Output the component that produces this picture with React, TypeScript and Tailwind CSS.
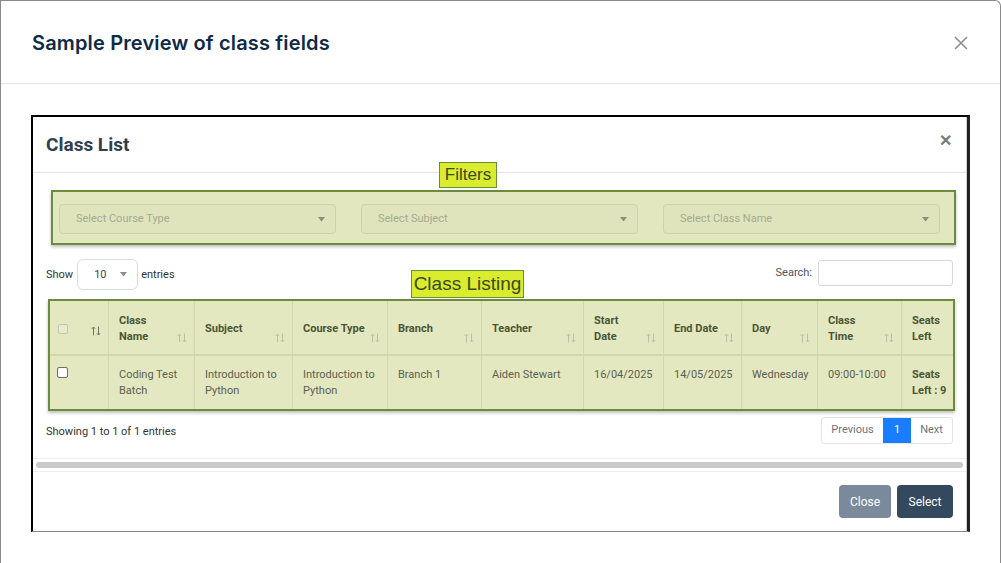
import React from "react";

const Caret = () => (
  <svg width="7" height="5" viewBox="0 0 7 5" className="shrink-0">
    <path d="M0 0 L7 0 L3.5 4.5 Z" fill="#8a8f80" />
  </svg>
);

const Sort = ({ dark = false }: { dark?: boolean }) => {
  const c = dark ? "#6f7562" : "#bcc1a4";
  return (
    <svg width="10" height="10" viewBox="0 0 10 10" className="shrink-0">
      <path d="M2.5 9.5 V1 M0.8 2.8 L2.5 1 L4.2 2.8" stroke={c} strokeWidth="1" fill="none" />
      <path d="M7.5 0.5 V9 M5.8 7.2 L7.5 9 L9.2 7.2" stroke={c} strokeWidth="1" fill="none" />
    </svg>
  );
};

const cols = [
  { w: 59, h: "", body: "" },
  { w: 86, h: "Class\nName", body: "Coding Test\nBatch" },
  { w: 98, h: "Subject", body: "Introduction to\nPython" },
  { w: 95, h: "Course Type", body: "Introduction to\nPython" },
  { w: 94, h: "Branch", body: "Branch 1" },
  { w: 102, h: "Teacher", body: "Aiden Stewart" },
  { w: 80, h: "Start\nDate", body: "16/04/2025" },
  { w: 78, h: "End Date", body: "14/05/2025" },
  { w: 76, h: "Day", body: "Wednesday" },
  { w: 84, h: "Class\nTime", body: "09:00-10:00" },
  { w: 60, h: "Seats\nLeft", body: "Seats\nLeft : 9" },
];

export default function App() {
  return (
    <div className="w-[1001px] h-[563px] overflow-hidden bg-white" style={{ fontFamily: "Roboto, sans-serif" }}>
      <div className="w-[1001px] h-[570px] border-t border-l border-r border-[#8a8a8a] rounded-tr-[6px] bg-white flex flex-col">
        {/* Header */}
        <div className="h-[83px] border-b border-[#e6e6e6] flex items-center justify-between pl-[31px] pr-[32px] shrink-0">
          <div className="text-[20px] font-semibold text-[#0e2a47] tracking-[0.15px] mt-[2px]" style={{ fontFamily: "Inter, 'Open Sans', sans-serif" }}>
            Sample Preview of class fields
          </div>
          <svg width="14" height="14" viewBox="0 0 14 14" className="mt-[1px]">
            <path d="M1 1 L13 13 M13 1 L1 13" stroke="#8e8e8e" strokeWidth="1.6" />
          </svg>
        </div>
        {/* Body */}
        <div className="pl-[30px] pt-[31px]">
          <div className="w-[939px] h-[417px] border-t-2 border-l-2 border-r-[3px] border-t-black border-l-black border-r-[#222] border-b border-b-[#8a8a8a] bg-white relative">
            <div className="h-full w-[934px] border-r border-[#cfcfcf] flex flex-col">
              {/* Class List header */}
              <div className="h-[56px] border-b border-[#e3e3e3] flex items-center justify-between pl-[13px] pr-[14px] shrink-0">
                <div className="text-[19px] font-bold text-[#2f3f50] mt-[2px]">Class List</div>
                <div className="text-[16px] font-bold text-[#7a7a7a] leading-none mt-[-8px]">✕</div>
              </div>
              {/* Filters */}
              <div className="relative pt-[17px] pl-[18px]">
                <div className="absolute left-[406px] top-[-11px] w-[58px] h-[26px] bg-[#d9ec2e] border border-[#6b8c3c] flex items-center justify-center text-[17px] text-[#3d4a20]" style={{ fontFamily: "'Liberation Sans', Arial, sans-serif" }}>
                  Filters
                </div>
                <div className="w-[905px] h-[55px] bg-[#e3e7bf] border-2 border-[#6b8c3c] shadow-[0_2px_3px_rgba(0,0,0,0.25)] flex items-start pt-[12px] gap-[25px] pl-[6px]">
                  {["Select Course Type", "Select Subject", "Select Class Name"].map((t) => (
                    <div key={t} className="w-[277px] h-[30px] border border-[#cdd1ad] rounded-[4px] bg-[#dfe4bc] flex items-center justify-between pl-[16px] pr-[10px]">
                      <span className="text-[11px] text-[#a4ab92] mt-[1px]">{t}</span>
                      <Caret />
                    </div>
                  ))}
                </div>
              </div>
              {/* Show / Search */}
              <div className="relative flex items-center justify-between pl-[13px] pr-[13px] mt-[14px] h-[31px]">
                <div className="flex items-center text-[11px] text-[#333]">
                  <span className="mt-[2px]">Show</span>
                  <div className="ml-[4px] w-[61px] h-[31px] border border-[#d8dde3] rounded-[6px] flex items-center pl-[16px] pr-[10px] justify-between">
                    <span className="text-[11px] text-[#444] mt-[2px]">10</span>
                    <Caret />
                  </div>
                  <span className="ml-[3px] mt-[2px]">entries</span>
                </div>
                <div className="flex items-center text-[11px] text-[#4a5560] -mt-[4px]">
                  <span className="mt-[2px]">Search:</span>
                  <div className="ml-[6px] w-[135px] h-[26px] border border-[#d5d9de] rounded-[3px]" />
                </div>
                <div className="absolute left-[378px] top-[11px] w-[113px] h-[28px] bg-[#d9ec2e] border border-[#6b8c3c] flex items-center justify-center text-[19px] text-[#3d4a20] z-10" style={{ fontFamily: "'Liberation Sans', Arial, sans-serif" }}>
                  Class Listing
                </div>
              </div>
              {/* Table */}
              <div className="ml-[15px] mt-[9px] w-[907px] h-[112px] border-2 border-[#6b8c3c] bg-[#e4e8c0] shadow-[0_2px_3px_rgba(0,0,0,0.25)] overflow-hidden">
                <div className="flex h-[55px] border-b-2 border-[#d2d6ae]">
                  {cols.map((c, i) => (
                    <div key={i} style={{ width: c.w }} className={`shrink-0 h-full flex items-center justify-between pl-[10px] pr-[7px] pt-[3px] ${i < cols.length - 1 ? "border-r border-[#d3d7b0]" : ""}`}>
                      {i === 0 ? (
                        <>
                          <div className="w-[10px] h-[10px] border border-[#c4c8aa] rounded-[2px] bg-[#e8ebcc] -ml-[2px]" />
                          <span className="mt-[3px]"><Sort dark /></span>
                        </>
                      ) : (
                        <>
                          <span className="block text-[11px] font-bold text-[#4a5535] leading-[16px] whitespace-pre">{c.h}</span>
                          {i < cols.length - 1 && <span className="self-end mb-[11px]"><Sort /></span>}
                        </>
                      )}
                    </div>
                  ))}
                </div>
                <div className="flex h-[53px]">
                  {cols.map((c, i) => (
                    <div key={i} style={{ width: c.w }} className={`shrink-0 h-full pl-[10px] pt-[11px] text-[11px] leading-[16px] ${i < cols.length - 1 ? "border-r border-[#d3d7b0]" : ""}`}>
                      {i === 0 ? (
                        <div className="w-[11px] h-[11px] border border-[#6c7060] rounded-[2px] bg-white -ml-[3px]" />
                      ) : (
                        <span className={`block whitespace-pre ${i === cols.length - 1 ? "font-bold text-[#4a5535]" : "text-[#5a5f52]"}`}>{c.body}</span>
                      )}
                    </div>
                  ))}
                </div>
              </div>
              {/* Showing / pagination */}
              <div className="flex items-center justify-between pl-[13px] pr-[13px] mt-[6px] h-[27px]">
                <span className="text-[11px] text-[#333] mt-[3px]">Showing 1 to 1 of 1 entries</span>
                <div className="flex h-[27px] border border-[#e2e5e8] rounded-[3px] text-[11px] overflow-hidden">
                  <div className="w-[61px] flex items-center justify-center text-[#6c757d]">Previous</div>
                  <div className="w-[28px] flex items-center justify-center bg-[#1a7cff] text-white">1</div>
                  <div className="w-[41px] flex items-center justify-center text-[#6c757d]">Next</div>
                </div>
              </div>
              {/* Scrollbar */}
              <div className="mt-[14px] h-[14px] border-t border-b border-[#eeeeee] flex items-center px-[3px]">
                <div className="w-full h-[6px] rounded-full bg-[#c9c9c9]" />
              </div>
              {/* Footer */}
              <div className="flex-1 flex justify-end items-start gap-[6px] pt-[13px] pr-[13px]">
                <div className="w-[52px] h-[33px] rounded-[4px] bg-[#7a8a9a] text-white text-[12px] flex items-center justify-center">Close</div>
                <div className="w-[56px] h-[33px] rounded-[4px] bg-[#34495e] text-white text-[12px] flex items-center justify-center">Select</div>
              </div>
            </div>
          </div>
        </div>
      </div>
    </div>
  );
}
